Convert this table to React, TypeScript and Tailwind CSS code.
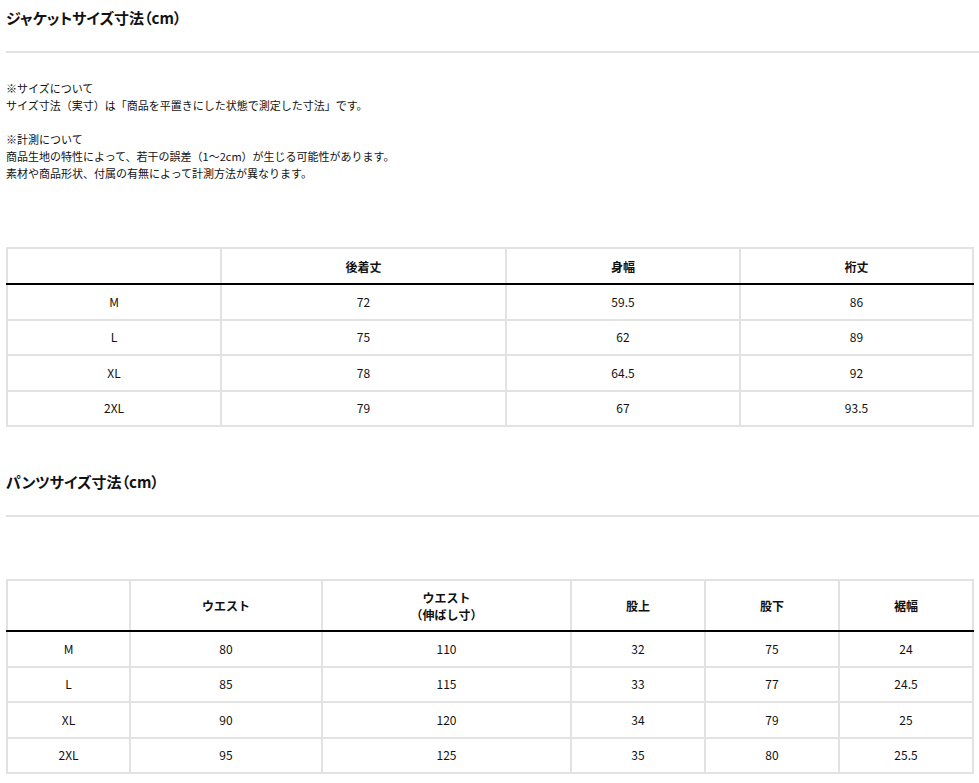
const jacketRows = [
  ["M", "72", "59.5", "86"],
  ["L", "75", "62", "89"],
  ["XL", "78", "64.5", "92"],
  ["2XL", "79", "67", "93.5"],
];

const pantsRows = [
  ["M", "80", "110", "32", "75", "24"],
  ["L", "85", "115", "33", "77", "24.5"],
  ["XL", "90", "120", "34", "79", "25"],
  ["2XL", "95", "125", "35", "80", "25.5"],
];

function SectionTitle({ children }: { children: React.ReactNode }) {
  return (
    <div>
      <h2 className="h-[22px] text-[15px] leading-[22px] font-bold text-[#111] [font-feature-settings:'palt']">
        {children}
      </h2>
      <div className="mt-[22px] h-[2px] bg-[#e2e2e2] -mr-[6px]" />
    </div>
  );
}

function SizeTable({
  headers,
  widths,
  rows,
  headHeight,
}: {
  headers: React.ReactNode[];
  widths: string[];
  rows: string[][];
  headHeight: string;
}) {
  return (
    <table className="w-[966px] border-collapse table-fixed text-center text-[12px] text-[#111]">
      <thead>
        <tr className={headHeight}>
          {headers.map((h, i) => (
            <th
              key={i}
              className={`${widths[i]} border-2 border-[#e2e2e2] border-b-black font-bold leading-[17px] p-0`}
            >
              {h}
            </th>
          ))}
        </tr>
      </thead>
      <tbody>
        {rows.map((row) => (
          <tr key={row[0]} className="h-[35.5px]">
            {row.map((cell, i) => (
              <td key={i} className="border-2 border-[#e2e2e2] p-0 font-normal">
                {cell}
              </td>
            ))}
          </tr>
        ))}
      </tbody>
    </table>
  );
}

export default function App() {
  return (
    <div className="min-h-screen bg-white px-[6px] pt-[7px] pb-4 font-['Noto_Sans_CJK_JP',sans-serif] text-[#111]">
      <SectionTitle>ジャケットサイズ寸法（cm）</SectionTitle>

      {/* Notes */}
      <div className="mt-[27px] text-[11px] leading-[17px]">
        <p>※サイズについて</p>
        <p>サイズ寸法（実寸）は「商品を平置きにした状態で測定した寸法」です。</p>
        <p className="h-[17px]" />
        <p>※計測について</p>
        <p>商品生地の特性によって、若干の誤差（1〜2cm）が生じる可能性があります。</p>
        <p>素材や商品形状、付属の有無によって計測方法が異なります。</p>
      </div>

      <div className="mt-[65px]">
        <SizeTable
          headers={["", "後着丈", "身幅", "裄丈"]}
          widths={["w-[214px]", "w-[285px]", "w-[234px]", "w-[233px]"]}
          rows={jacketRows}
          headHeight="h-[36px]"
        />
      </div>

      <div className="mt-[44px]">
        <SectionTitle>パンツサイズ寸法（cm）</SectionTitle>
      </div>

      <div className="mt-[62px]">
        <SizeTable
          headers={[
            "",
            "ウエスト",
            <>
              ウエスト
              <br />
              （伸ばし寸）
            </>,
            "股上",
            "股下",
            "裾幅",
          ]}
          widths={["w-[123px]", "w-[192px]", "w-[249px]", "w-[134px]", "w-[134px]", "w-[134px]"]}
          rows={pantsRows}
          headHeight="h-[51px]"
        />
      </div>
    </div>
  );
}
